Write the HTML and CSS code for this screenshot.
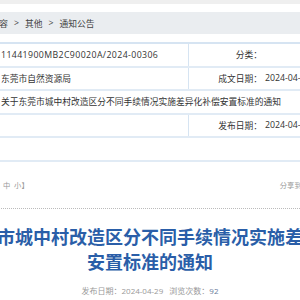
FILE: index.html
```html
<!DOCTYPE html>
<html lang="zh-CN">
<head>
    <meta charset="UTF-8">
    <meta name="viewport" content="width=device-width, initial-scale=1.0">
    <title>通知公告</title>
    <link rel="stylesheet" href="styles.css">
</head>
<body>
    <div class="top-strip"></div>

    <!-- Breadcrumb bar -->
    <div class="crumbs">
        <div class="page crumbs-row">
            <span class="crumb-lead">首页 <i>&gt;</i> 政务公开 <i>&gt;</i> 内容</span>
            <i>&gt;</i>
            <span>其他</span>
            <i>&gt;</i>
            <span>通知公告</span>
        </div>
    </div>

    <div class="page">
        <!-- Document info table -->
        <table class="info">
            <colgroup>
                <col class="c-label">
                <col class="c-value">
                <col class="c-label2">
                <col>
            </colgroup>
            <tr>
                <th>索引号：</th>
                <td class="split code">11441900MB2C90020A/2024-00306</td>
                <th class="label2">分类：</th>
                <td></td>
            </tr>
            <tr>
                <th>发布机构：</th>
                <td class="split">东莞市自然资源局</td>
                <th class="label2">成文日期：</th>
                <td>2024-04-29</td>
            </tr>
            <tr>
                <th>名称：</th>
                <td colspan="3">关于东莞市城中村改造区分不同手续情况实施差异化补偿安置标准的通知</td>
            </tr>
            <tr>
                <th>文号：</th>
                <td class="split">&nbsp;</td>
                <th class="label2">发布日期：</th>
                <td>2024-04-29</td>
            </tr>
            <tr>
                <th>&nbsp;</th>
                <td colspan="3">&nbsp;</td>
            </tr>
        </table>

        <div class="tools">
            <span class="font-size">【字体：大&nbsp;&nbsp;</span>
            <span>中&nbsp;&nbsp;小】</span>
            <span class="share">分享到：</span>
        </div>

        <div class="divider"></div>

        <h1 class="title">关于东莞市城中村改造区分不同手续情况实施差异化补偿安置标准的通知</h1>

        <div class="meta">
            <span>发布日期：2024-04-29</span>
            <span>浏览次数：<b>92</b></span>
        </div>
    </div>
</body>
</html>
```

FILE: styles.css
```css
/* Base */
* {
    margin: 0;
    padding: 0;
    box-sizing: border-box;
}

body {
    font-family: "Open Sans", "Noto Sans CJK SC", sans-serif;
    color: #333;
    background: #fff;
    overflow: hidden;
}

/* Page column is wider than the window, its centre sits at x=150 */
.page {
    width: 600px;
    margin-left: -150px;
}

.top-strip {
    height: 4px;
    background: #efefef;
}

/* Breadcrumb */
.crumbs {
    margin-top: 8px;
    height: 22px;
    background: #eaedf0;
}

.crumbs-row {
    display: flex;
    align-items: center;
    height: 100%;
    font-size: 8.75px;
    color: #444;
    white-space: nowrap;
}

.crumbs-row i {
    font-style: normal;
    margin: 0 6px;
}

.crumb-lead {
    flex: 0 0 158px;
    text-align: right;
}

/* Info table */
.info {
    width: 100%;
    margin-top: 8px;
    border-collapse: collapse;
    table-layout: fixed;
    font-size: 8.75px;
    border-top: 2px solid #d6e4f2;
}

.c-label { width: 148px; }
.c-value { width: 190px; }
.c-label2 { width: 74px; }

.info tr {
    height: 23.5px;
    border-bottom: 2px solid #e1ebf5;
}

.info th,
.info td {
    font-weight: normal;
    text-align: left;
    padding: 0 3px;
    white-space: nowrap;
    overflow: hidden;
}

.info th {
    text-align: right;
}

.info td.split {
    border-right: 1px solid #d6e4f2;
}

.info td.code {
    letter-spacing: 0.4px;
}

.info th.label2 {
    padding-right: 0;
}

/* Font size / share row */
.tools {
    display: flex;
    align-items: center;
    margin-top: 18px;
    height: 10px;
    font-size: 7.3px;
    color: #999;
    white-space: nowrap;
}

.font-size {
    flex: 0 0 153px;
    text-align: right;
}

.share {
    margin-left: auto;
    margin-right: 141px;
}

.divider {
    margin-top: 18px;
    border-top: 1px dotted #bbb;
}

/* Title */
.title {
    margin-top: 15px;
    padding: 0 75px;
    font-family: "Noto Sans CJK SC", sans-serif;
    font-size: 18px;
    line-height: 25px;
    font-weight: bold;
    text-align: center;
    color: #2a5ea8;
}

.meta {
    margin-top: 11px;
    font-size: 8px;
    line-height: 12px;
    text-align: center;
    color: #999;
}

.meta span + span {
    margin-left: 4px;
}

.meta b {
    font-weight: normal;
    color: #6a7a9a;
}
```
